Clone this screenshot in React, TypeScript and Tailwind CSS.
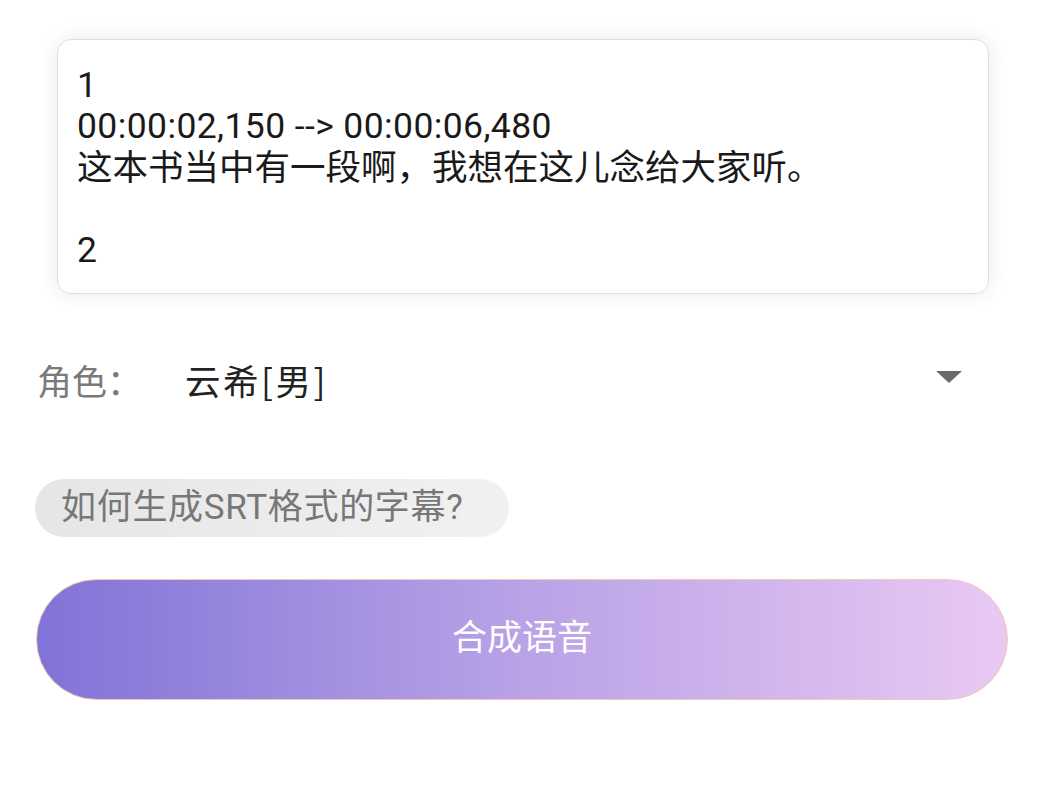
const FONT = "font-['Roboto','Noto_Sans_CJK_SC',sans-serif]"

export default function App() {
  return (
    <div className={`w-[1046px] h-[808px] bg-white ${FONT} pt-[39px] px-[36px]`}>
      {/* subtitle text box */}
      <div className="mx-[21px] h-[255px] rounded-[14px] border border-[#e0e0e0] bg-white shadow-[0_0_20px_rgba(0,0,0,0.09)] px-[19px] pt-[25px] text-[35.5px] leading-[41.3px] text-[#1a1a1a] overflow-hidden">
        <div>1</div>
        <div className="tracking-[0.4px]">00:00:02,150 --&gt; 00:00:06,480</div>
        <div>这本书当中有一段啊，我想在这儿念给大家听。</div>
        <div>&nbsp;</div>
        <div>2</div>
      </div>

      {/* role select */}
      <div className="mt-[49px] flex items-center h-[74px]">
        <span className="w-[149px] text-[35px] text-[#7a7a7a] pl-[1px] font-['Noto_Sans_CJK_SC',sans-serif]">角色：</span>
        <span className="flex-1 text-[35.5px] tracking-[2.5px] text-[#222] font-['Noto_Sans_CJK_SC',sans-serif]">云希[男]</span>
        <svg width="28" height="14" viewBox="0 0 28 14" className="mr-[47px] mt-[-6px]">
          <path d="M1 1 L27 1 L14 13 Z" fill="#6b6b6b" />
        </svg>
      </div>

      {/* help chip */}
      <div className="mt-[62px] flex">
        <div className="h-[58px] w-[474px] -ml-[1px] rounded-full bg-gradient-to-r from-[#e6e6e6] to-[#f1f1f1] flex items-center pl-[26px] text-[35px] tracking-[0.7px] text-[#777]">
          如何生成SRT格式的字幕?
        </div>
      </div>

      {/* synth button */}
      <button className="mt-[42px] w-[972px] h-[121px] rounded-full border border-[#f3c7b6] bg-gradient-to-r from-[#8173d7] via-[#b9a2e6] to-[#e9c9f4] text-white text-[35px] flex items-center justify-center">
        合成语音
      </button>
    </div>
  )
}
